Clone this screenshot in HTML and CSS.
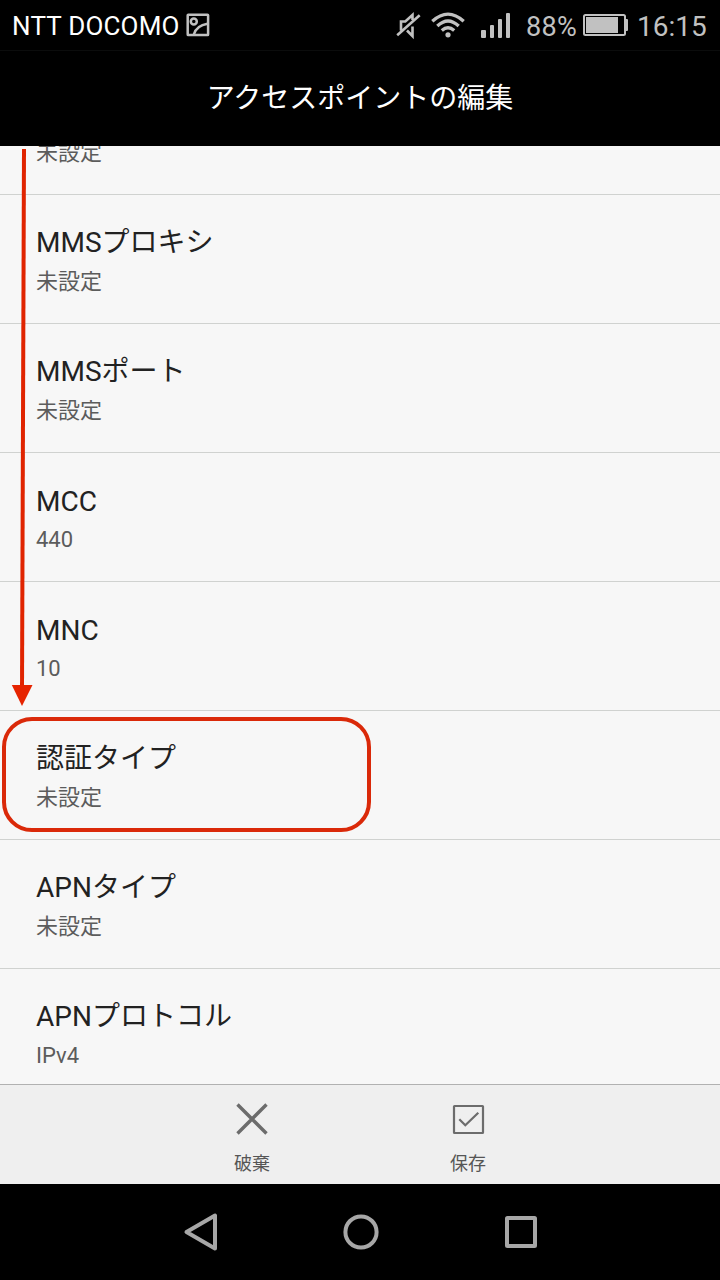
FILE: index.html
```html
<!DOCTYPE html>
<html lang="ja">
<head>
<meta charset="utf-8">
<title>アクセスポイントの編集</title>
<link rel="stylesheet" href="styles.css">
</head>
<body>
<div class="screen">
  <header class="status">
    <span class="carrier">NTT DOCOMO</span>
    <svg class="shot" width="24" height="24" viewBox="0 0 24 24"><rect x="1.7" y="1.7" width="20.4" height="20.4" rx=".6"/><circle cx="7.8" cy="8.4" r="3"/><path d="M7.8 21.5Q10.5 12.5 21.5 10.8"/></svg>
    <svg class="mute" width="26" height="28" viewBox="0 0 26 28"><path d="M1.2 23.3 23.7 3.2M5 18.5V9.5H9.3L16.5 3V8M16.5 14.5V24L11 18.5"/></svg>
    <svg class="wifi" width="34" height="26" viewBox="0 0 34 26"><path d="M1.3 9.2Q17 -5 32.7 9.2M6.3 14Q17 3.8 27.7 14M10.8 18.5Q17 12.8 23.2 18.5"/><circle cx="17" cy="22.8" r="2.6"/></svg>
    <svg class="signal" width="30" height="26" viewBox="0 0 30 26"><rect x="0" y="17" width="5" height="8" rx="1"/><rect x="9" y="12" width="4" height="13" rx="1"/><rect x="17" y="6" width="4" height="19" rx="1"/><rect x="25" y="0" width="4" height="25" rx="1"/></svg>
    <span class="percent">88%</span>
    <svg class="battery" width="45" height="22" viewBox="0 0 45 22"><rect class="outline" x="1" y="1" width="41" height="20" rx="1.5"/><rect x="3" y="3" width="32" height="16"/><rect x="42" y="5" width="3" height="12" rx="1"/></svg>
    <span class="clock">16:15</span>
  </header>
  <h1 class="title">アクセスポイントの編集</h1>
  <main class="list">
    <div class="row partial"><div class="value">未設定</div></div>
    <div class="row"><div class="name">MMSプロキシ</div><div class="value">未設定</div></div>
    <div class="row"><div class="name">MMSポート</div><div class="value">未設定</div></div>
    <div class="row latin"><div class="name">MCC</div><div class="value">440</div></div>
    <div class="row latin"><div class="name">MNC</div><div class="value">10</div></div>
    <div class="row"><div class="name">認証タイプ</div><div class="value">未設定</div><div class="highlight"></div></div>
    <div class="row"><div class="name">APNタイプ</div><div class="value">未設定</div></div>
    <div class="row"><div class="name">APNプロトコル</div><div class="value">IPv4</div></div>
    <svg class="arrow" width="40" height="570" viewBox="0 0 40 570"><path class="shaft" d="M24 3 22 545"/><path class="head" d="M11.8 539H32.5L22 560Z"/></svg>
  </main>
  <div class="actions">
    <div class="action"><svg width="34" height="34" viewBox="0 0 34 34"><path class="cross" d="M2.5 2.5 31.5 31.5M31.5 2.5 2.5 31.5"/></svg><span>破棄</span></div>
    <div class="action"><svg width="34" height="34" viewBox="0 0 34 34"><rect x="3" y="4" width="29" height="27" rx=".5"/><path d="M8.3 17.2 14.3 23.3 27.3 10.7"/></svg><span>保存</span></div>
  </div>
  <nav class="nav">
    <svg width="36" height="40" viewBox="0 0 36 40"><path d="M3.5 20 32 3.5V36.5Z"/></svg>
    <svg width="36" height="40" viewBox="0 0 36 40"><circle cx="18" cy="20" r="15.6"/></svg>
    <svg width="36" height="40" viewBox="0 0 36 40"><rect x="4" y="6" width="28" height="28" rx=".5"/></svg>
  </nav>
</div>
</body>
</html>
```
FILE: styles.css
```css
* { box-sizing: border-box; }
body { margin: 0; font-family: Roboto, "Noto Sans CJK JP", sans-serif; }
svg { display: block; fill: none; flex: none; }
.screen { width: 720px; height: 1280px; display: flex; flex-direction: column; overflow: hidden; background: #000; }
.status { height: 51px; flex: none; display: flex; align-items: flex-start; border-bottom: 1px solid #0b0c0c; color: #c1c1c1; line-height: 32px; white-space: nowrap; }
.carrier { width: 168px; margin: 10px 6px 0 12px; color: #fff; font-size: 26px; letter-spacing: .2px; }
.shot { margin-top: 13px; stroke: #c1c1c1; stroke-width: 2.5; }
.mute { margin: 12px 9px 0 auto; stroke: #c1c1c1; stroke-width: 2.6; }
.wifi { margin: 12px 16px 0 0; stroke: #c1c1c1; stroke-width: 3.3; }
.wifi circle { fill: #c1c1c1; stroke: none; }
.signal { margin: 13px 15px 0 0; fill: #c1c1c1; }
.percent { width: 52px; margin: 11px 5px 0 0; font-size: 27px; letter-spacing: .3px; }
.battery { margin: 14px 9px 0 0; fill: #c1c1c1; }
.outline { fill: none; stroke: #c1c1c1; stroke-width: 2; }
.clock { width: 71px; margin: 11px 12px 0 0; font-size: 28px; }
.title { height: 95px; flex: none; margin: 0; color: #fff; font-size: 28px; font-weight: 400; line-height: 96px; text-align: center; }
.list { position: relative; height: 938px; flex: none; overflow: hidden; background: #f7f7f7; }
.row { position: relative; height: 129px; padding: 28px 36px 0; border-bottom: 1px solid #d0d2d0; }
.row.partial { display: flex; align-items: flex-end; height: 49px; padding: 0 36px 25px; }
.row.latin { padding-top: 29px; }
.name { color: #222; font-size: 28px; line-height: 40px; }
.value { margin-top: 3px; color: #5c5c5c; font-size: 22px; line-height: 32px; }
.latin .value { margin-top: 2px; }
.highlight { position: absolute; left: 2px; top: 6px; width: 369px; height: 115px; border: 4px solid #da2909; border-radius: 30px; }
.arrow { position: absolute; left: 0; top: 0; }
.shaft { stroke: #e02400; stroke-width: 4; }
.head { fill: #e62400; }
.actions { height: 100px; flex: none; display: flex; justify-content: center; border-top: 1px solid #b1b1b1; background: #efefef; }
.action { width: 216px; display: flex; flex-direction: column; align-items: center; padding-top: 17px; color: #555; font-size: 18px; line-height: 26px; }
.action svg { margin-bottom: 15px; stroke: #6c6c6c; stroke-width: 2.2; }
.action .cross { stroke-width: 3.4; }
.nav { height: 96px; flex: none; display: flex; justify-content: center; align-items: center; gap: 124px; padding-left: 2px; }
.nav svg { stroke: #a7a7a7; stroke-width: 4; stroke-linejoin: round; }
```
